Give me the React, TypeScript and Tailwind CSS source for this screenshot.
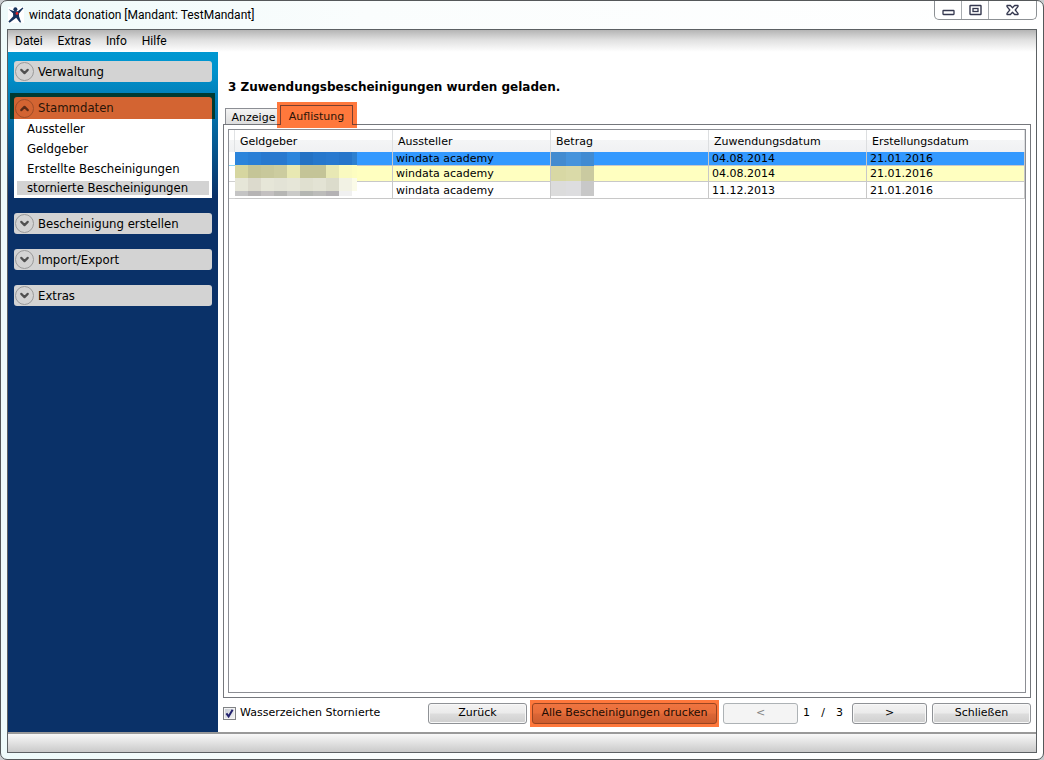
import React, { useState } from 'react';
import { ChevronDown, ChevronUp } from 'lucide-react';
import clsx from 'clsx';

interface Certificate {
  issuer: string;
  donated: string;
  created: string;
}

const menuItems = ['Datei', 'Extras', 'Info', 'Hilfe'];

const stammdaten = ['Aussteller', 'Geldgeber', 'Erstellte Bescheinigungen', 'stornierte Bescheinigungen'];

const columns = ['Geldgeber', 'Aussteller', 'Betrag', 'Zuwendungsdatum', 'Erstellungsdatum'];

const rows: Certificate[] = [
  { issuer: 'windata academy', donated: '04.08.2014', created: '21.01.2016' },
  { issuer: 'windata academy', donated: '04.08.2014', created: '21.01.2016' },
  { issuer: 'windata academy', donated: '11.12.2013', created: '21.01.2016' },
];

const rowStyles = ['h-[14px] bg-[#3399ff]', 'h-4 bg-[#ffffc0]', 'h-[17px] bg-white'];

// Pixelated donor names, one colour list per band
const nameBands = [
  { y: 0, h: 13, colors: ['#2b84db', '#297fd6', '#2879cf', '#2879cf', '#2b85dc', '#2472c4', '#2677cc', '#2879cf', '#2675ca', '#2d80d0'] },
  { y: 13, h: 13, colors: ['#d6d6a0', '#c5c597', '#c8c89b', '#cccc9f', '#e8e8b2', '#c4c497', '#c4c497', '#e8e8b4', '#fafac0', '#fdfdc0'] },
  { y: 26, h: 13, colors: ['#e6e6d8', '#dcdacd', '#e6e6d8', '#e3e3d6', '#e6e6d8', '#e0e0d0', '#e3e3d4', '#dcdccc', '#f2f2e4', '#fbfbe8'] },
  { y: 39, h: 5, colors: ['#c4c4c4', '#b6b4b4', '#c3c0c0', '#b6b6b4', '#cacac8', '#b4b6b2', '#bcbcba', '#b4b2b4', '#f0f0f0', '#ffffff'] },
];

const amountBands = [
  { y: 0, h: 14, colors: ['#428bd0', '#4593dc', '#418bd2'] },
  { y: 14, h: 15, colors: ['#d8d8a4', '#dadaa8', '#cacaa0'] },
  { y: 29, h: 15, colors: ['#dcdcdc', '#dddddf', '#c8c8c8'] },
];

function Mosaic({ bands, step, width }: { bands: typeof nameBands; step: number; width: number }) {
  return (
    <svg width={width} height={44} className="absolute top-0 left-0 z-10" shapeRendering="crispEdges">
      {bands.map(band =>
        band.colors.map((color, i) => (
          <rect key={`${band.y}-${i}`} x={i * step} y={band.y} width={step} height={band.h} fill={color} />
        ))
      )}
    </svg>
  );
}

function AppLogo() {
  return (
    <svg width="16" height="16" viewBox="0 0 16 16">
      <rect width="16" height="16" fill="#fff" />
      <path d="M0.6 2.2 5.6 4 9.8 4.2 14.6 .4 15.4 1.2 11 6.4 11 9.2 13.2 15.4 11.6 15.2 8.2 10.8 1.6 15.8 .4 14.6 5.2 9.2 5 6.2Z" fill="#15335c" />
      <circle cx="7.4" cy="2.2" r="2" fill="#15335c" />
      <circle cx="9" cy="6.4" r="1.4" fill="#e02525" />
    </svg>
  );
}

function WindowControls() {
  return (
    <div className="flex h-[19px] rounded-b-[5px] border border-t-0 border-[#8c9094] bg-white">
      <button aria-label="Minimieren" className="flex w-[27px] items-center justify-center border-r border-[#a8acb0]">
        <svg width="13" height="18" viewBox="0 0 13 18">
          <rect x="1" y="9.5" width="11" height="4" rx="0.5" fill="#fff" stroke="#35384f" strokeWidth="1.3" />
        </svg>
      </button>
      <button aria-label="Maximieren" className="flex w-[27px] items-center justify-center border-r border-[#a8acb0]">
        <svg width="13" height="18" viewBox="0 0 13 18">
          <rect x="1" y="4.5" width="11" height="9" rx="0.5" fill="#fff" stroke="#35384f" strokeWidth="1.4" />
          <rect x="4" y="7.5" width="5" height="3" fill="#fff" stroke="#35384f" strokeWidth="1.3" />
        </svg>
      </button>
      <button aria-label="Fenster schließen" className="flex w-[47px] items-center justify-center">
        <svg width="13" height="18" viewBox="0 0 13 18">
          <path
            d="M1 4.5H4.4L6.5 6.7 8.6 4.5H12V5.7L9.2 9 12 12.3V13.5H8.6L6.5 11.3 4.4 13.5H1V12.3L3.8 9 1 5.7Z"
            fill="#fff"
            stroke="#35384f"
            strokeWidth="1.3"
            strokeLinejoin="round"
          />
        </svg>
      </button>
    </div>
  );
}

function SectionHeader({ label, open = false }: { label: string; open?: boolean }) {
  const Icon = open ? ChevronUp : ChevronDown;
  return (
    <button
      aria-expanded={open}
      className={clsx(
        'flex w-full items-center gap-1 pl-px text-left text-[13px] leading-4',
        open ? 'h-[22px] rounded-t-[3px] bg-[#d36432] text-[#2a1408]' : 'h-[21px] rounded-[3px] bg-[#d3d3d3] text-black'
      )}
    >
      <span
        className={clsx(
          'flex size-[19px] items-center justify-center rounded-full border',
          open ? 'border-[#a04d28] text-[#5a2a16]' : 'border-[#9a9a9a] text-[#505050]'
        )}
      >
        <Icon size={13} strokeWidth={4} />
      </span>
      {label}
    </button>
  );
}

function Sidebar() {
  return (
    <nav className="flex w-[210px] shrink-0 flex-col gap-[15px] bg-[linear-gradient(#0098d2_0px,#0092cc_20px,#0a3168_145px)] px-1.5 pt-[9px] font-['DejaVu_Sans_Condensed','DejaVu_Sans',sans-serif]">
      <SectionHeader label="Verwaltung" />
      <div>
        <div className="-mt-1 -mr-[3px] -ml-1 bg-[#003b32] pt-1 pr-[3px] pl-1">
          <SectionHeader label="Stammdaten" open />
        </div>
        <ul className="bg-white px-[3px] pb-[3px] text-[13px]">
          {stammdaten.map((item, i) => (
            <li key={item}>
              <a
                href="#"
                className={clsx(
                  'block pl-2.5 whitespace-nowrap',
                  i === stammdaten.length - 1 ? 'mt-0.5 h-3.5 bg-[#d3d3d3] leading-[14px]' : 'h-5 leading-5'
                )}
              >
                {item}
              </a>
            </li>
          ))}
        </ul>
      </div>
      <SectionHeader label="Bescheinigung erstellen" />
      <SectionHeader label="Import/Export" />
      <SectionHeader label="Extras" />
    </nav>
  );
}

const cell = 'border-r border-b border-[#c8c8c8] p-0';

function CertificateTable() {
  return (
    <table className="w-full table-fixed border-separate border-spacing-0 text-[11px] leading-3">
      <colgroup>
        <col className="w-[6px]" />
        <col span={5} />
      </colgroup>
      <thead>
        <tr className="h-[22px] bg-[linear-gradient(#ffffff_45%,#f4f5f6_46%,#f0f1f3)]">
          <th className="border-r border-[#e0e2e4] p-0" />
          {columns.map(col => (
            <th key={col} className="border-r border-[#dcdee0] p-0 pt-0.5 pl-[5px] text-left font-normal">
              {col}
            </th>
          ))}
        </tr>
      </thead>
      <tbody>
        {rows.map((row, i) => (
          <tr key={i} className={rowStyles[i]}>
            <td className={clsx('border-b bg-white p-0', i === 0 ? 'border-[#8ad4f4]' : 'border-[#d0d0d0]')} />
            <td className={clsx(cell, 'relative')}>
              {i === 0 && <Mosaic bands={nameBands} step={13} width={122} />}
            </td>
            <td className={clsx(cell, 'pt-px pl-[3px]')}>{row.issuer}</td>
            <td className={clsx(cell, 'relative')}>
              {i === 0 && <Mosaic bands={amountBands} step={15} width={43} />}
            </td>
            <td className={clsx(cell, 'pt-px pl-[3px]')}>{row.donated}</td>
            <td className={clsx(cell, 'pt-px pl-[3px]')}>{row.created}</td>
          </tr>
        ))}
      </tbody>
    </table>
  );
}

const buttonBase = 'h-[21px] rounded-[3px] border text-center';
const buttonGray = 'border-[#8f9296] bg-[linear-gradient(#f3f3f3,#ebebeb_48%,#dddddd_52%,#cfcfcf)] shadow-[inset_0_0_0_1px_#f8f8f8]';

function Footer() {
  const [watermark, setWatermark] = useState(true);

  return (
    <div className="flex h-[34px] shrink-0 items-center pb-1 text-[11px] leading-4">
      <label className="flex items-center gap-1">
        <span className="relative size-[13px]">
          <input
            type="checkbox"
            checked={watermark}
            onChange={e => setWatermark(e.target.checked)}
            className="block size-[13px] appearance-none border border-[#808285] bg-[linear-gradient(135deg,#c4c9d2,#f6f6f6)] shadow-[inset_0_0_0_1px_#f4f4f4]"
          />
          {watermark && (
            <svg width="13" height="13" viewBox="0 0 13 13" className="pointer-events-none absolute inset-0">
              <path d="M3.4 6.4 5.6 9.4 9.6 2.8" fill="none" stroke="#22226e" strokeWidth="2" />
            </svg>
          )}
        </span>
        Wasserzeichen Stornierte
      </label>
      <div className="ml-auto flex items-center">
        <button className={clsx(buttonBase, buttonGray, 'w-[99px]')}>Zurück</button>
        <div className="ml-[3px] bg-[#ff783c] px-0.5 py-[3px]">
          <button className={clsx(buttonBase, 'block w-[185px] border-[#9a4420] bg-[linear-gradient(#ef7440,#e86e3a_48%,#dc6636_52%,#cc5c2e)] text-[#200c04]')}>
            Alle Bescheinigungen drucken
          </button>
        </div>
        <button disabled className={clsx(buttonBase, 'ml-1 w-[75px] border-[#adb2b5] bg-[#f4f4f4] text-[#838383]')}>
          &lt;
        </button>
        <div className="flex w-[54px] justify-between pr-[9px] pl-[5px]">
          <span>1</span>
          <span>/</span>
          <span>3</span>
        </div>
        <button className={clsx(buttonBase, buttonGray, 'w-[75px]')}>&gt;</button>
        <button className={clsx(buttonBase, buttonGray, 'ml-[5px] w-[99px]')}>Schließen</button>
      </div>
    </div>
  );
}

export default function App() {
  return (
    <div className="h-screen bg-[#c9cccf]">
      <div className="flex h-full flex-col rounded-[7px] border border-[#55585a] bg-[linear-gradient(90deg,#eefafa,#fafdfd_35%,#ffffff)] px-1.5 pb-1.5 text-black">
        <header className="flex h-7 shrink-0 justify-between font-[Roboto,sans-serif]">
          <div className="flex items-center gap-[5px] pl-px text-xs">
            <AppLogo />
            <h1>windata donation [Mandant: TestMandant]</h1>
          </div>
          <WindowControls />
        </header>

        <div className="flex min-h-0 flex-1 flex-col border border-[#5c6063] bg-white">
          <div className="flex h-[22px] shrink-0 items-center gap-[15px] bg-[linear-gradient(#b4b4b4,#e0e0e0_45%,#ffffff)] pl-[7px] font-[Roboto,sans-serif] text-xs">
            {menuItems.map(item => (
              <button key={item}>{item}</button>
            ))}
          </div>

          <div className="flex min-h-0 flex-1">
            <Sidebar />
            <main className="flex min-w-0 flex-1 flex-col pr-[5px] pl-[5px] font-['DejaVu_Sans',Verdana,sans-serif]">
              <h2 className="mt-[27px] pl-[5px] text-xs font-bold">3 Zuwendungsbescheinigungen wurden geladen.</h2>

              {/* Tab strip */}
              <div role="tablist" className="mt-[7px] -mb-1 flex shrink-0 items-start pl-0.5 text-[11px] leading-4">
                <button role="tab" aria-selected={false} className="mt-1.5 h-4 w-[52px] border border-r-0 border-b-0 border-[#8c8e94] bg-[linear-gradient(#f4f4f4,#dddddd)] pt-px pl-1">
                  Anzeige
                </button>
                <div className="relative z-10 flex h-[26px] bg-[#ff783c] pt-[3px]">
                  <span className="h-5 w-[3px] border-b border-[#7a4030]" />
                  <button role="tab" aria-selected className="h-5 w-[73px] border border-b-0 border-[#7a4030] pt-0.5 text-[#2a1408]">
                    Auflistung
                  </button>
                  <span className="h-5 w-1 border-b border-[#7a4030]" />
                </div>
              </div>

              <div className="flex min-h-0 flex-1 flex-col border border-[#75777c] bg-white p-1">
                <div className="min-h-0 flex-1 border border-[#8c8e94]">
                  <CertificateTable />
                </div>
              </div>
              <Footer />
            </main>
          </div>

          <div className="h-5 shrink-0 border-t-2 border-[#999999] bg-[linear-gradient(#f8f8f8,#cacaca)]" />
        </div>
      </div>
    </div>
  );
}
